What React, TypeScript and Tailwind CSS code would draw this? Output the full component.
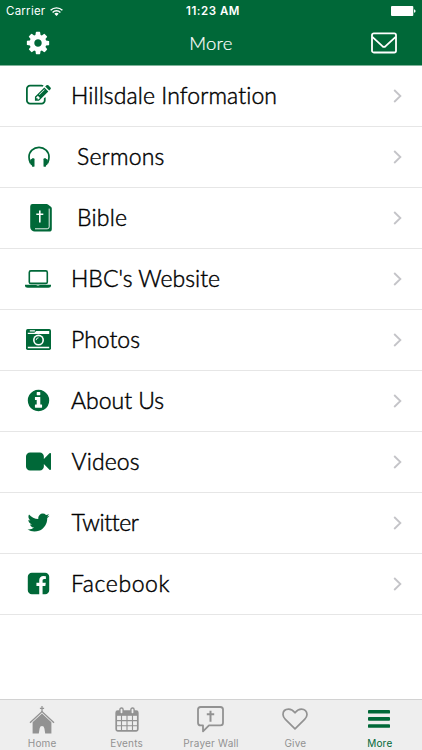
import React from 'react';

interface IconProps {
  className?: string;
}

interface MenuItem {
  label: string;
  icon: React.FC<IconProps>;
  iconClass: string;
  labelClass: string;
}

interface TabItem {
  label: string;
  icon: React.FC<IconProps>;
  iconClass: string;
  active?: boolean;
}

const CogIcon: React.FC<IconProps> = ({ className }) => (
  <svg viewBox="0 0 1792 1792" fill="currentColor" className={className}>
    <path d="M1152 896q0-106-75-181t-181-75-181 75-75 181 75 181 181 75 181-75 75-181zm512-109v222q0 12-8 23t-20 13l-185 28q-19 54-39 91 35 50 107 138 10 12 10 25t-9 23q-27 37-99 108t-94 71q-12 0-26-9l-138-108q-44 23-91 38-16 136-29 186-7 28-36 28h-222q-14 0-24.5-8.5t-11.5-21.5l-28-184q-49-16-90-37l-141 107q-10 9-25 9-14 0-25-11-126-114-165-168-7-10-7-23 0-12 8-23 15-21 51-66.5t54-70.5q-27-50-41-99l-183-27q-13-2-21-12.5t-8-23.5v-222q0-12 8-23t19-13l186-28q14-46 39-92-40-57-107-138-10-12-10-24 0-10 9-23 26-36 98.5-107.5t94.5-71.5q13 0 26 10l138 107q44-23 91-38 16-136 29-186 7-28 36-28h222q14 0 24.5 8.5t11.5 21.5l28 184q49 16 90 37l142-107q9-9 24-9 13 0 25 10 129 119 165 170 7 8 7 22 0 12-8 23-15 21-51 66.5t-54 70.5q26 50 41 98l183 28q13 2 21 12.5t8 23.5z" />
  </svg>
);

const EnvelopeIcon: React.FC<IconProps> = ({ className }) => (
  <svg viewBox="0 0 26 22" fill="none" stroke="currentColor" strokeWidth="1.8" strokeLinejoin="round" className={className}>
    <rect x="1" y="1.3" width="24" height="19.2" rx="1.8" />
    <path d="M1.3 4.9 11.4 14.2Q13 15.6 14.6 14.2L24.7 4.9" />
  </svg>
);

const WifiIcon: React.FC<IconProps> = ({ className }) => (
  <svg viewBox="0 0 13 9" fill="none" stroke="currentColor" strokeWidth="1.45" className={className}>
    <path d="M.6 3.3a8.4 8.4 0 0 1 11.8 0M2.6 5.4a5.5 5.5 0 0 1 7.8 0" />
    <path d="M6.5 9 4.3 6.8a3.2 3.2 0 0 1 4.4 0z" fill="currentColor" stroke="none" />
  </svg>
);

const BatteryIcon: React.FC<IconProps> = ({ className }) => (
  <svg viewBox="0 0 25 10" fill="currentColor" className={className}>
    <rect width="22.3" height="10" rx="1" />
    <path d="M23 3.2q1.6.4 1.6 1.8T23 6.8z" />
  </svg>
);

const EditIcon: React.FC<IconProps> = ({ className }) => (
  <svg viewBox="0 0 1792 1792" fill="currentColor" className={className}>
    <path d="M888 1184l116-116-152-152-116 116v56h96v96h56zm440-720q-16-16-33 1l-350 350q-17 17-1 33t33-1l350-350q17-17 1-33zm80 594v190q0 119-84.5 203.5t-203.5 84.5h-832q-119 0-203.5-84.5t-84.5-203.5v-832q0-119 84.5-203.5t203.5-84.5h832q63 0 117 25 15 7 18 23 3 17-9 29l-49 49q-14 14-32 8-23-6-45-6h-832q-66 0-113 47t-47 113v832q0 66 47 113t113 47h832q66 0 113-47t47-113v-126q0-13 9-22l64-64q15-15 35-7t20 29zm-96-738l288 288-672 672h-288v-288zm444 132l-92 92-288-288 92-92q28-28 68-28t68 28l152 152q28 28 28 68t-28 68z" />
  </svg>
);

const HeadphonesIcon: React.FC<IconProps> = ({ className }) => (
  <svg viewBox="0 0 22 21" fill="none" stroke="currentColor" className={className}>
    <path d="M2.4 17.2C1.4 15 1 13 1 11 1 5.5 5.5 1.4 11 1.4S21 5.5 21 11c0 2-.4 4-1.4 6.2" strokeWidth="1.7" />
    <path d="M2.2 13.8q1.2-1 2.8-1.2v7.2q-1.6-.2-2.8-1.7zM19.8 13.8q-1.2-1-2.8-1.2v7.2q1.6-.2 2.8-1.7z" fill="currentColor" stroke="none" />
    <rect x="4" y="12.3" width="2.5" height="8.5" rx=".9" fill="currentColor" stroke="none" />
    <rect x="15.5" y="12.3" width="2.5" height="8.5" rx=".9" fill="currentColor" stroke="none" />
  </svg>
);

const BibleIcon: React.FC<IconProps> = ({ className }) => (
  <svg viewBox="0 0 22 28" fill="currentColor" className={className}>
    <path d="M2.5 0H16.6q1 0 1.7.7l2.9 2.2q.6.6.6 1.6V25q0 2.6-2.6 2.6H4.8Q3 27.6 1.6 26.2.2 25 .2 23V2.4Q.2 0 2.5 0z" />
    <path d="M19.2 4.6v18.2q0 2-2 2H5" fill="none" stroke="white" strokeWidth=".9" />
    <path d="M9.8 6.6v11.8M6.3 10.2h7" stroke="white" strokeWidth="1.6" />
  </svg>
);

const LaptopIcon: React.FC<IconProps> = ({ className }) => (
  <svg viewBox="0 0 26 18" className={className}>
    <rect x="4.3" y=".9" width="18" height="12.5" rx="1.5" fill="none" stroke="currentColor" strokeWidth="1.6" />
    <path fillRule="evenodd" fill="currentColor" d="M0 14.8h26v1.2q0 1.8-2.6 1.8H2.6Q0 17.8 0 16zm11.7.6v.6h2.6v-.6z" />
  </svg>
);

const CameraIcon: React.FC<IconProps> = ({ className }) => (
  <svg viewBox="0 0 25 21" fill="currentColor" className={className}>
    <rect width="25" height="21" rx="1.7" />
    <path d="M3.8 1.3h5.1v1.1H3.8zM1.8 3.7h6.6L10.2 2h13v3H1.8zM1.8 17.7h21.4v1.5H1.8z" fill="white" />
    <circle cx="12.5" cy="11.1" r="5.5" fill="white" />
    <circle cx="12.5" cy="11.1" r="3.9" />
    <path d="M10.2 11.1a2.3 2.3 0 0 1 2.3-2.3" fill="none" stroke="white" strokeWidth=".9" />
  </svg>
);

const InfoIcon: React.FC<IconProps> = ({ className }) => (
  <svg viewBox="0 0 1792 1792" fill="currentColor" className={className}>
    <path d="M1152 1376v-160q0-14-9-23t-23-9h-96v-512q0-14-9-23t-23-9h-320q-14 0-23 9t-9 23v160q0 14 9 23t23 9h96v320h-96q-14 0-23 9t-9 23v160q0 14 9 23t23 9h448q14 0 23-9t9-23zm-128-896v-160q0-14-9-23t-23-9h-192q-14 0-23 9t-9 23v160q0 14 9 23t23 9h192q14 0 23-9t9-23zm640 416q0 209-103 385.5t-279.5 279.5-385.5 103-385.5-103-279.5-279.5-103-385.5 103-385.5 279.5-279.5 385.5-103 385.5 103 279.5 279.5 103 385.5z" />
  </svg>
);

const VideoIcon: React.FC<IconProps> = ({ className }) => (
  <svg viewBox="0 0 1792 1792" fill="currentColor" className={className}>
    <path d="M1792 352v1088q0 42-39 59-13 5-25 5-27 0-45-19l-403-403v166q0 119-84.5 203.5t-203.5 84.5h-704q-119 0-203.5-84.5t-84.5-203.5v-704q0-119 84.5-203.5t203.5-84.5h704q119 0 203.5 84.5t84.5 203.5v165l403-402q18-19 45-19 12 0 25 5 39 17 39 59z" />
  </svg>
);

const TwitterIcon: React.FC<IconProps> = ({ className }) => (
  <svg viewBox="0 0 1792 1792" fill="currentColor" className={className}>
    <path d="M1684 408q-67 98-162 167 1 14 1 42 0 130-38 259.5t-115.5 248.5-184.5 210.5-258 146-323 54.5q-271 0-496-145 35 4 78 4 225 0 401-138-105-2-188-64.5t-114-159.5q33 5 61 5 43 0 85-11-112-23-185.5-111.5t-73.5-205.5v-4q68 38 146 41-66-44-105-115t-39-154q0-88 44-163 121 149 294.5 238.5t371.5 99.5q-8-38-8-74 0-134 94.5-228.5t228.5-94.5q140 0 236 102 109-21 205-78-37 115-142 178 93-10 186-50z" />
  </svg>
);

const FacebookIcon: React.FC<IconProps> = ({ className }) => (
  <svg viewBox="0 0 1792 1792" fill="currentColor" className={className}>
    <path d="M1376 128q119 0 203.5 84.5t84.5 203.5v960q0 119-84.5 203.5t-203.5 84.5h-188v-595h199l30-232h-229v-148q0-56 23.5-84t91.5-28l122-1v-207q-63-9-178-9-136 0-217.5 80t-81.5 226v171h-200v232h200v595h-532q-119 0-203.5-84.5t-84.5-203.5v-960q0-119 84.5-203.5t203.5-84.5h960z" />
  </svg>
);

const ChevronIcon: React.FC<IconProps> = ({ className }) => (
  <svg viewBox="0 0 9 14" fill="none" stroke="currentColor" strokeWidth="1.8" className={className}>
    <path d="M1.2 1 7.4 7l-6.2 6" />
  </svg>
);

const ChurchIcon: React.FC<IconProps> = ({ className }) => (
  <svg viewBox="0 0 26 28" fill="currentColor" className={className}>
    <path d="M12.4 0h1.2v1.8h1.5v1.1h-1.5v3h-1.2v-3h-1.5V1.8h1.5z" />
    <path d="M1 16.8 13 5.6l12 11.2" fill="none" stroke="currentColor" strokeWidth="1.4" />
    <path d="M13 7.4 22.4 16.2V27.4h-6.2l-.8-5q-.5-2.4-2.4-2.4t-2.4 2.4l-.8 5H3.6V16.2z" />
  </svg>
);

const CalendarIcon: React.FC<IconProps> = ({ className }) => (
  <svg viewBox="0 0 24 25" fill="none" stroke="currentColor" className={className}>
    <rect x="1.2" y="4.2" width="21.6" height="19.6" rx="1.5" strokeWidth="1.7" />
    <path d="M1 4.2h22v4.6H1z" fill="currentColor" stroke="none" />
    <path d="M6.5 8v16M12 8v16M17.5 8v16M1 13.6h22M1 18.8h22" strokeWidth="1.1" />
    <rect x="4.9" y="1" width="3.2" height="6" rx="1.5" fill="#eeeeee" strokeWidth="1.4" />
    <rect x="15.9" y="1" width="3.2" height="6" rx="1.5" fill="#eeeeee" strokeWidth="1.4" />
  </svg>
);

const PrayerIcon: React.FC<IconProps> = ({ className }) => (
  <svg viewBox="0 0 27 27" fill="none" stroke="currentColor" className={className}>
    <path d="M3.6 1h19.8Q26 1 26 3.6v13.2q0 2.6-2.6 2.6H12l-6 6v-6H3.6Q1 19.4 1 16.8V3.6Q1 1 3.6 1z" strokeWidth="1.8" strokeLinejoin="round" />
    <path d="M13.5 4.8v11M9.8 8.3h7.4" strokeWidth="2" />
  </svg>
);

const HeartIcon: React.FC<IconProps> = ({ className }) => (
  <svg viewBox="0 0 26 22" fill="none" stroke="currentColor" strokeWidth="1.7" strokeLinejoin="round" className={className}>
    <path d="M13 20.8 3.4 11.4C1.7 9.7 1 8.4 1 6.6 1 3.1 3.3 1.1 6.6 1.1c3 0 4.8 1.7 6.4 3.7 1.6-2 3.4-3.7 6.4-3.7C22.7 1.1 25 3.1 25 6.6c0 1.8-.7 3.1-2.4 4.8z" />
  </svg>
);

const BarsIcon: React.FC<IconProps> = ({ className }) => (
  <svg viewBox="0 0 22 18" fill="currentColor" className={className}>
    <rect width="22" height="3.6" rx=".9" />
    <rect y="7.1" width="22" height="3.6" rx=".9" />
    <rect y="14.2" width="22" height="3.6" rx=".9" />
  </svg>
);

const menuItems: MenuItem[] = [
  { label: 'Hillsdale Information', icon: EditIcon, iconClass: 'ml-[26px] size-[25px]', labelClass: 'ml-[71px] tracking-[0.1px]' },
  { label: 'Sermons', icon: HeadphonesIcon, iconClass: 'ml-[28px] w-[22px] h-[21px] mb-px', labelClass: 'ml-[77px] tracking-[0.2px]' },
  { label: 'Bible', icon: BibleIcon, iconClass: 'ml-[30px] w-[22px] h-[28px]', labelClass: 'ml-[77px] tracking-[0.2px]' },
  { label: "HBC's Website", icon: LaptopIcon, iconClass: 'ml-[25px] w-[26px] h-[18px]', labelClass: 'ml-[71px] tracking-normal' },
  { label: 'Photos', icon: CameraIcon, iconClass: 'ml-[26px] w-[25px] h-[21px]', labelClass: 'ml-[71px] tracking-normal' },
  { label: 'About Us', icon: InfoIcon, iconClass: 'ml-[26px] size-[25px]', labelClass: 'ml-[71px] tracking-normal' },
  { label: 'Videos', icon: VideoIcon, iconClass: 'ml-[26px] size-[25px]', labelClass: 'ml-[71.5px] tracking-[0.1px]' },
  { label: 'Twitter', icon: TwitterIcon, iconClass: 'ml-[26px] size-[25px]', labelClass: 'ml-[71.5px] tracking-[-0.4px]' },
  { label: 'Facebook', icon: FacebookIcon, iconClass: 'ml-[26px] size-[25px]', labelClass: 'ml-[71px] tracking-[0.6px]' },
];

const tabs: TabItem[] = [
  { label: 'Home', icon: ChurchIcon, iconClass: 'w-[26px] h-[28px] mt-px' },
  { label: 'Events', icon: CalendarIcon, iconClass: 'w-[24px] h-[25px]' },
  { label: 'Prayer Wall', icon: PrayerIcon, iconClass: 'w-[27px] h-[27px]' },
  { label: 'Give', icon: HeartIcon, iconClass: 'w-[26px] h-[22px] mr-px' },
  { label: 'More', icon: BarsIcon, iconClass: 'w-[22px] h-[18px] mr-px', active: true },
];

const StatusBar: React.FC = () => (
  <div className="grid grid-cols-3 items-center h-[22px] px-1.5 font-['Inter',sans-serif]">
    <div className="flex items-center gap-[5px]">
      <span className="text-[11.5px] leading-none tracking-[0.25px] pt-0.5">Carrier</span>
      <WifiIcon className="w-[13px] h-[9px]" />
    </div>
    <span className="pt-0.5 pl-1 text-center text-[11.5px] leading-none font-semibold tracking-[0.5px] whitespace-nowrap">11:23 AM</span>
    <BatteryIcon className="w-[25px] h-[10px] justify-self-end" />
  </div>
);

const MenuRow: React.FC<{ item: MenuItem }> = ({ item }) => {
  const Icon = item.icon;

  return (
    <li className="grid grid-cols-[1fr_auto] items-center h-[61px] pr-5 pb-px border-b border-[#e6e6e6]">
      <a href="#" className="grid items-center">
        <Icon className={`col-start-1 row-start-1 text-[#006838] ${item.iconClass}`} />
        <span className={`col-start-1 row-start-1 pb-px text-[23px] leading-none font-light [-webkit-text-stroke:0.45px_black] text-black whitespace-nowrap ${item.labelClass}`}>
          {item.label}
        </span>
      </a>
      <ChevronIcon className="w-[9px] h-[14px] text-[#c4c4c8]" />
    </li>
  );
};

const App: React.FC = () => {
  return (
    <div className="flex flex-col w-[422px] h-[750px] overflow-hidden bg-white font-['Lato',sans-serif]">
      <header className="h-[66px] shrink-0 bg-[#006838] text-white border-b border-[#80b39b]">
        <StatusBar />
        <div className="grid grid-cols-3 items-center h-[42px] pl-[25px] pr-[25px]">
          <CogIcon className="size-[26px]" />
          <h1 className="text-center text-[18.5px] leading-none font-light tracking-[0.2px] [-webkit-text-stroke:0.2px_white]">More</h1>
          <EnvelopeIcon className="w-[26px] h-[22px] justify-self-end" />
        </div>
      </header>

      <ul className="flex-1">
        {menuItems.map(item => (
          <MenuRow key={item.label} item={item} />
        ))}
      </ul>

      <nav className="grid grid-cols-5 h-[51px] shrink-0 border-t border-[#d2d2d2] bg-[#eeeeee] font-['Inter',sans-serif]">
        {tabs.map(tab => {
          const Icon = tab.icon;
          return (
            <a key={tab.label} href="#" className={`flex flex-col items-center ${tab.active ? 'text-[#006838]' : 'text-[#929292]'}`}>
              <span className="flex h-[38px] items-center">
                <Icon className={tab.iconClass} />
              </span>
              <span className="text-[10px] leading-[10px] tracking-[0.2px] whitespace-nowrap">{tab.label}</span>
            </a>
          );
        })}
      </nav>
    </div>
  );
};

export default App;
